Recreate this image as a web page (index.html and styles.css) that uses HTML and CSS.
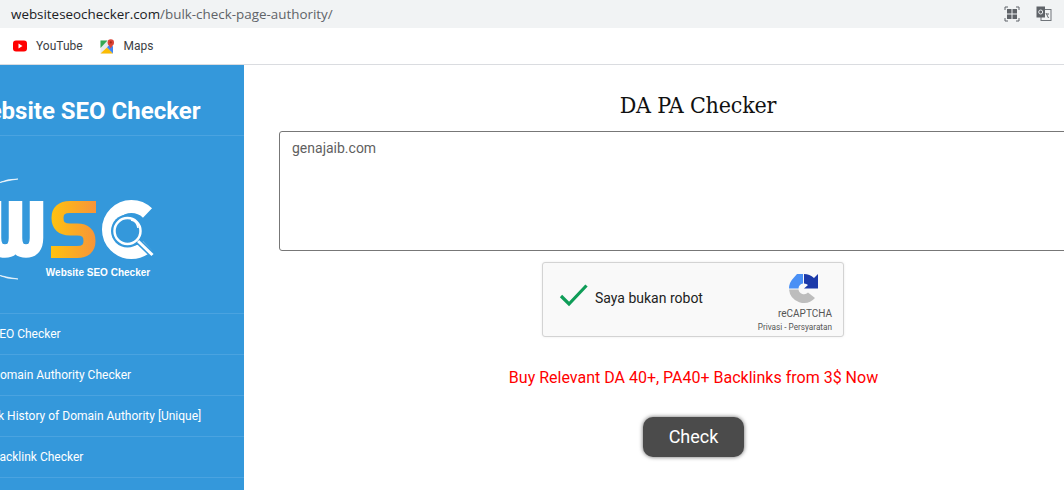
FILE: index.html
```html
<!DOCTYPE html>
<html lang="en">
<head>
  <meta charset="UTF-8">
  <meta name="viewport" content="width=device-width, initial-scale=1.0">
  <title>DA PA Checker</title>
  <link rel="stylesheet" href="styles.css">
</head>
<body>
  <div class="url-bar">
    <div class="url"><span class="host">websiteseochecker.com</span>/bulk-check-page-authority/</div>
    <div class="url-icons">
      <svg width="16" height="16" viewBox="0 0 16 16">
        <path d="M1 4V1h3M12 1h3v3M15 12v3h-3M4 15H1v-3" fill="none" stroke="#5f6368" stroke-width="1"/>
        <rect x="3" y="3" width="4.5" height="4.5" fill="#5f6368"/>
        <rect x="8.5" y="3" width="4.5" height="4.5" fill="#5f6368"/>
        <rect x="3" y="8.5" width="4.5" height="4.5" fill="#5f6368"/>
        <rect x="8.5" y="8.5" width="4.5" height="4.5" fill="#5f6368"/>
      </svg>
      <svg width="16" height="16" viewBox="0 0 16 16">
        <rect x="5" y="3.5" width="10" height="11" fill="#f1f3f4" stroke="#70757a"/>
        <rect x="0.5" y="0.5" width="8.5" height="11" fill="#5f6368"/>
        <circle cx="4.7" cy="6" r="2" fill="none" stroke="#e8eaed"/>
        <path d="M10 7l2.5 5M11 8h2" fill="none" stroke="#5f6368"/>
      </svg>
    </div>
  </div>

  <div class="bookmarks">
    <a class="bookmark">
      <svg width="14" height="12" viewBox="0 0 14 12">
        <rect width="14" height="11" y="0.5" rx="3" fill="#f00"/>
        <path d="M5.5 3.5v5l4-2.5z" fill="#fff"/>
      </svg>
      YouTube
    </a>
    <a class="bookmark">
      <svg width="15" height="15" viewBox="0 0 15 15">
        <rect x="0.5" y="1.5" width="12.5" height="13" fill="#e8eaed"/>
        <path d="M0.5 1.5H7.5L0.5 9z" fill="#34a853"/>
        <path d="M0.5 14.5L7 8.5l6 6z" fill="#fbbc04"/>
        <path d="M7 8.5l6 6V7.5L9.5 5.5z" fill="#4285f4"/>
        <circle cx="10.8" cy="3.4" r="3.2" fill="#db4437"/>
        <path d="M8.4 5.3L10.8 9.5l2.4-4.2z" fill="#db4437"/>
        <circle cx="10.8" cy="3.4" r="1.1" fill="#a52714"/>
      </svg>
      Maps
    </a>
  </div>

  <div class="page">
    <aside class="sidebar">
      <div class="brand">Website SEO Checker</div>
      <div class="logo">
        <svg width="244" height="177" viewBox="0 0 244 177">
          <defs>
            <linearGradient id="sGrad" gradientUnits="userSpaceOnUse" x1="51" x2="96" y1="0" y2="0">
              <stop offset="0" stop-color="#ffc20e"/>
              <stop offset="1" stop-color="#f7943a"/>
            </linearGradient>
          </defs>
          <!-- swoosh round the mark -->
          <path d="M18 43Q8 42.5 -2 47Q8 44.5 18 43zM18 143Q8 143.5 -2 139Q8 141.5 18 143z" fill="#fff" stroke="#fff" stroke-width="0.6"/>
          <!-- W -->
          <path d="M-5.5 65V102Q-5.5 115 5 115Q15.5 115 15.5 102V65M15.5 102Q15.5 115 26 115Q36.5 115 36.5 102V65" fill="none" stroke="#fff" stroke-width="13.5"/>
          <!-- S -->
          <path d="M96 71H70Q57.5 71 57.5 82Q57.5 93.5 70 93.5H77Q89.5 93.5 89.5 105Q89.5 116 77 116H51" fill="none" stroke="url(#sGrad)" stroke-width="12"/>
          <!-- C and magnifier -->
          <path d="M147.5 77A23 23 0 1 0 147.5 110" fill="none" stroke="#fff" stroke-width="13"/>
          <circle cx="127.5" cy="95" r="16.5" fill="#3498db"/>
          <circle cx="127.5" cy="95" r="13" fill="none" stroke="#fff" stroke-width="2.5"/>
          <path d="M138 105L152.5 119" stroke="#3498db" stroke-width="6"/>
          <path d="M138 105L152.5 119" stroke="#fff" stroke-width="3"/>
          <path d="M131 84Q137 85 138 92" fill="none" stroke="#fff" stroke-width="1.5"/>
          <text class="logo-label" x="98" y="140" text-anchor="middle">Website SEO Checker</text>
        </svg>
      </div>
      <ul class="side-nav">
        <li><a>SEO Checker</a></li>
        <li><a>Domain Authority Checker</a></li>
        <li><a class="long-lead">Check History of Domain Authority [Unique]</a></li>
        <li><a>Backlink Checker</a></li>
      </ul>
    </aside>

    <main class="content">
      <h1>DA PA Checker</h1>
      <textarea class="domains" rows="5">genajaib.com</textarea>
      <div class="captcha">
        <svg class="tick" width="30" height="24" viewBox="0 0 30 24">
          <path d="M2 13L10 21L27.5 2.5" fill="none" stroke="#0f9d58" stroke-width="3.2"/>
        </svg>
        <span class="captcha-label">Saya bukan robot</span>
        <div class="captcha-brand">
          <svg class="captcha-logo" width="30" height="30" viewBox="0 0 30 30">
            <path d="M0 15.5H9.5A5.5 5.5 0 0 0 19 18.5L26 24A15 15 0 0 1 0 15.5Z" fill="#bdbdbd"/>
            <path d="M0 14.5A15 15 0 0 1 4.5 4L8 0H14V9.5A5.5 5.5 0 0 0 9.5 14.5Z" fill="#4a90f5"/>
            <path d="M15 0A15 15 0 0 1 25 4L29 0V14.5H15L19 11A5.5 5.5 0 0 0 15 9.5Z" fill="#1c3aa9"/>
          </svg>
          <span class="captcha-name">reCAPTCHA</span>
          <span class="captcha-links">Privasi - Persyaratan</span>
        </div>
      </div>
      <a class="promo">Buy Relevant DA 40+, PA40+ Backlinks from 3$ Now</a>
      <button class="check-btn" type="button">Check</button>
    </main>
  </div>
</body>
</html>
```

FILE: styles.css
```css
html, body {
  margin: 0;
  height: 490px;
  overflow: hidden;
  background: white;
  font-family: Roboto, Arial, sans-serif;
}
.url-bar {
  height: 28px;
  background: #f1f3f4;
  display: flex;
  align-items: center;
  justify-content: space-between;
  padding: 0 12px 0 11px;
}
.url {
  font-family: "Open Sans", Arial, sans-serif;
  font-size: 13.4px;
  color: #5f6368;
}
.host {
  color: #202124;
}
.url-icons {
  display: flex;
  gap: 16px;
}
.bookmarks {
  height: 36px;
  border-bottom: 1px solid #dadce0;
  display: flex;
  align-items: center;
  gap: 17px;
  padding-left: 13px;
}
.bookmark {
  display: flex;
  align-items: center;
  gap: 9px;
  font-size: 12px;
  color: #3c4043;
}
.page {
  display: flex;
  width: 1143px;
  height: 425px;
}
.sidebar {
  width: 244px;
  flex: none;
  background: #3498db;
  color: white;
  overflow: hidden;
}
.brand {
  height: 71px;
  box-sizing: border-box;
  border-bottom: 1px solid #4aa3e0;
  font-size: 24px;
  font-weight: 700;
  line-height: 92px;
  white-space: nowrap;
  margin-left: -32px;
}
.logo {
  height: 177px;
}
.logo svg {
  display: block;
}
.logo-label {
  font-family: "Liberation Sans", Arial, sans-serif;
  font-size: 10px;
  font-weight: 700;
  fill: white;
}
.side-nav {
  list-style: none;
  margin: 0;
  padding: 0;
}
.side-nav li {
  height: 41px;
  box-sizing: border-box;
  border-top: 1px solid #4aa3e0;
  font-size: 12px;
  font-weight: 400;
  line-height: 40px;
  white-space: nowrap;
}
.side-nav li:last-child {
  border-bottom: 1px solid #4aa3e0;
  height: 42px;
}
.side-nav a {
  display: block;
  margin-left: -8px;
}
.side-nav a.long-lead {
  margin-left: -29px;
}
.content {
  flex: 1;
  min-width: 0;
  padding: 0 35px;
  display: flex;
  flex-direction: column;
  align-items: center;
}
h1 {
  margin: 24px 0 10px 9px;
  font-family: "DejaVu Serif", serif;
  font-stretch: condensed;
  font-size: 23px;
  font-weight: 400;
  letter-spacing: -0.2px;
  line-height: 32px;
  color: #111;
}
.domains {
  width: 100%;
  height: 120px;
  box-sizing: border-box;
  border: 1px solid #777;
  border-radius: 3px;
  padding: 7px 12px;
  font-family: Roboto, Arial, sans-serif;
  font-size: 14px;
  line-height: 18px;
  color: #5f5f5f;
  resize: none;
  outline: none;
}
.captcha {
  width: 302px;
  height: 75px;
  margin: 11px 1px 0 0;
  box-sizing: border-box;
  background: #f9f9f9;
  border: 1px solid #d3d3d3;
  border-radius: 3px;
  box-shadow: 0 0 3px rgba(0,0,0,0.08);
  display: flex;
  align-items: center;
  padding-left: 16px;
}
.tick {
  margin-bottom: 10px;
}
.captcha-label {
  margin: 0 0 4px 6px;
  font-size: 14px;
  color: #222;
}
.captcha-brand {
  align-self: flex-start;
  margin-left: auto;
  margin-right: 11px;
  padding-top: 11px;
  display: flex;
  flex-direction: column;
  align-items: flex-end;
  color: #555;
}
.captcha-logo {
  margin-right: 13px;
}
.captcha-name {
  font-size: 10px;
  line-height: 12px;
  margin: 4px 0 0;
}
.captcha-links {
  font-size: 8.2px;
  line-height: 10px;
  margin-top: 2px;
  white-space: nowrap;
}
.promo {
  margin-top: 31px;
  font-size: 16px;
  line-height: 19px;
  color: #f00;
}
.check-btn {
  width: 101px;
  height: 40px;
  margin-top: 30px;
  padding: 0 0 2px;
  border: none;
  border-radius: 10px;
  background: #4b4b4b;
  box-shadow: 0 0 4px rgba(0,0,0,0.6);
  color: white;
  font-family: Roboto, Arial, sans-serif;
  font-size: 18px;
}
```
